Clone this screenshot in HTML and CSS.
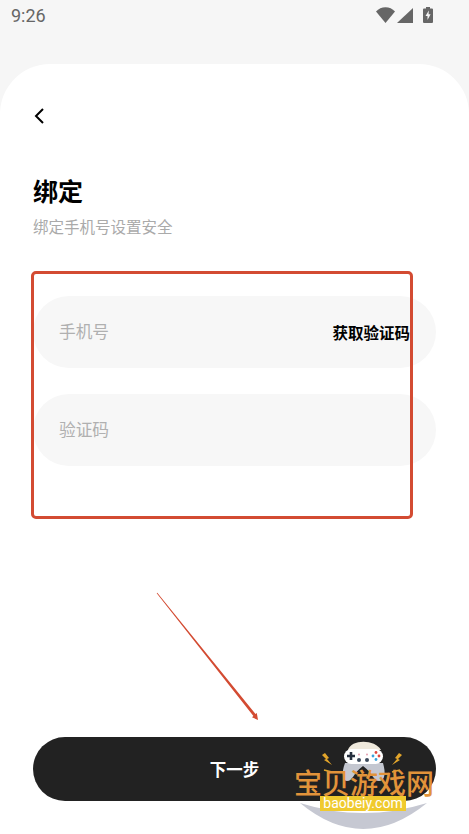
FILE: index.html
```html
<!DOCTYPE html>
<html lang="zh-CN">
<head>
    <meta charset="UTF-8">
    <meta name="viewport" content="width=device-width, initial-scale=1.0">
    <title>绑定</title>
    <link rel="stylesheet" href="styles.css">
</head>
<body>
    <div class="status-bar">
        <span class="time">9:26</span>
        <div class="status-icons">
            <svg width="19" height="16" viewBox="0 0 19 16"><path d="M0 4.500C2.500 1.800 5.800.3 9.500.3s7 1.500 9.500 4.200L9.500 16z" fill="#666"/></svg>
            <svg width="16" height="15" viewBox="0 0 16 15"><path d="M16 0V15H0z" fill="#666"/></svg>
            <svg width="10" height="16" viewBox="0 0 10 16"><path d="M3 0h4v1.500h2a1 1 0 0 1 1 1V15a1 1 0 0 1-1 1H1a1 1 0 0 1-1-1V2.500a1 1 0 0 1 1-1h2z" fill="#666"/><path d="M5.800 3.500 2.500 9h2v4L7.600 7.300H5.600z" fill="#f6f6f6"/></svg>
        </div>
    </div>

    <main class="sheet">
        <button class="back" aria-label="返回">
            <svg width="12" height="18" viewBox="0 0 12 18"><path d="M10 2 3 9l7 7" fill="none" stroke="#000" stroke-width="2"/></svg>
        </button>
        <h1 class="title">绑定</h1>
        <p class="subtitle">绑定手机号设置安全</p>

        <form class="fields">
            <div class="field">
                <span class="placeholder">手机号</span>
                <span class="get-code">获取验证码</span>
            </div>
            <div class="field">
                <span class="placeholder">验证码</span>
            </div>
        </form>

        <button class="next">下一步</button>
    </main>

    <!-- annotations on top of the screenshot -->
    <div class="red-box"></div>
    <svg class="red-arrow" width="110" height="134" viewBox="0 0 110 134">
        <path d="M.7 1.300 1.300.7 99.500 122 100.800 121 102 128 96 125.200 97.400 124z" fill="#d34b32"/>
    </svg>

    <!-- watermark -->
    <div class="watermark">
        <svg class="wm-art" width="175" height="99" viewBox="0 0 175 99">
            <path d="M25 68Q88 120 152 68Q88 88 25 68z" fill="#c6c8d2"/>
            <!-- controller -->
            <path d="M70 28C66 38 68 46 72 46C78 46 78 38 88 31C98 38 98 46 104 46C110 46 111 38 108 28z" fill="#c4c7d0"/>
            <path d="M73 15C76 4 100 4 106 15z" fill="#efe9dc"/>
            <rect x="69" y="14" width="39" height="15" rx="7.500" fill="#fff"/>
            <path d="M72 21h8M76 17v8" stroke="#26303f" stroke-width="2.600"/>
            <circle cx="84" cy="25" r="2" fill="#3b4a5c"/>
            <circle cx="92" cy="25" r="2" fill="#3b4a5c"/>
            <circle cx="84" cy="19.500" r="1" fill="#e3a0b0"/>
            <circle cx="92" cy="19.500" r="1" fill="#e3a0b0"/>
            <circle cx="101" cy="17.500" r="1.400" fill="#e0493f"/>
            <circle cx="101" cy="24.500" r="1.400" fill="#3aa3dc"/>
            <circle cx="98" cy="21" r="1.400" fill="#3aa3dc"/>
            <circle cx="104" cy="21" r="1.400" fill="#e0493f"/>
            <!-- sparks -->
            <path d="M50 18l4 5-2 1 5 6-8-5 2-1-4-4z" fill="#e2a52b"/>
            <path d="M124 18l-4 5 2 1-5 6 8-5-2-1 4-4z" fill="#e2a52b"/>
            <path d="M49 35l8 2M125 35l-8 2" stroke="#e2a52b" stroke-width="1.500"/>
        </svg>
        <div class="wm-name">宝贝游戏网</div>
        <div class="wm-url">baobeiy.com</div>
    </div>
</body>
</html>
```

FILE: styles.css
```css
* {
    box-sizing: border-box;
}
html, body {
    height: 100%;
}
body {
    margin: 0;
    background-color: #f6f6f6;
    font-family: Roboto, "Noto Sans CJK SC", sans-serif;
    overflow: hidden;
    position: relative;
    display: flex;
    flex-direction: column;
}
.status-bar {
    height: 64px;
    flex-shrink: 0;
    display: flex;
    justify-content: space-between;
    align-items: flex-start;
    padding: 6px 36px 0 11px;
    color: #666;
}
.time {
    font-size: 18px;
    line-height: 20px;
}
.status-icons {
    display: flex;
    align-items: flex-end;
    gap: 2px;
    height: 16px;
    margin-top: 1px;
}
.status-icons svg:nth-child(2) {
    margin-right: 8px;
}
.sheet {
    flex: 1;
    background-color: #fff;
    border-radius: 50px 50px 0 0;
    padding: 43px 33px 33px;
    display: flex;
    flex-direction: column;
}
.back {
    display: block;
    width: 12px;
    height: 18px;
    padding: 0;
    border: none;
    background: none;
    margin-bottom: 52px;
}
.title {
    margin: 0;
    font-size: 25px;
    line-height: 32px;
    font-weight: 700;
    color: #000;
}
.subtitle {
    margin: 8px 0 0;
    font-size: 15.500px;
    line-height: 22px;
    color: #aaa;
}
.fields {
    display: flex;
    flex-direction: column;
    gap: 26px;
    margin-top: 57px;
}
.field {
    height: 72px;
    border-radius: 36px;
    background-color: #f7f7f7;
    padding: 0 26px;
    display: flex;
    justify-content: space-between;
    align-items: center;
}
.placeholder {
    font-size: 16.700px;
    color: #b0b0b0;
    padding-bottom: 2px;
}
.get-code {
    font-size: 15.500px;
    font-weight: 700;
    color: #000;
}
.next {
    margin-top: auto;
    height: 64px;
    border: none;
    border-radius: 32px;
    background-color: #222;
    color: #fff;
    font-family: inherit;
    font-size: 16.500px;
    font-weight: 700;
}
.red-box {
    position: absolute;
    left: 31px;
    top: 271px;
    width: 382px;
    height: 248px;
    border: 3px solid #d34b32;
    border-radius: 5px;
}
.red-arrow {
    position: absolute;
    left: 156px;
    top: 592px;
}
.watermark {
    position: absolute;
    left: 275px;
    top: 735px;
    width: 175px;
    height: 99px;
}
.wm-art {
    position: absolute;
    left: 0;
    top: 0;
}
.wm-name {
    position: absolute;
    left: 19px;
    top: 39px;
    font-size: 28px;
    line-height: 21px;
    white-space: nowrap;
    font-weight: 500;
    color: #e2933a;
}
.wm-url {
    position: absolute;
    left: 45px;
    top: 61px;
    width: 86px;
    height: 15px;
    background-color: #f0ca2e;
    color: #fff;
    font-size: 14px;
    line-height: 15px;
    text-align: center;
}
```
